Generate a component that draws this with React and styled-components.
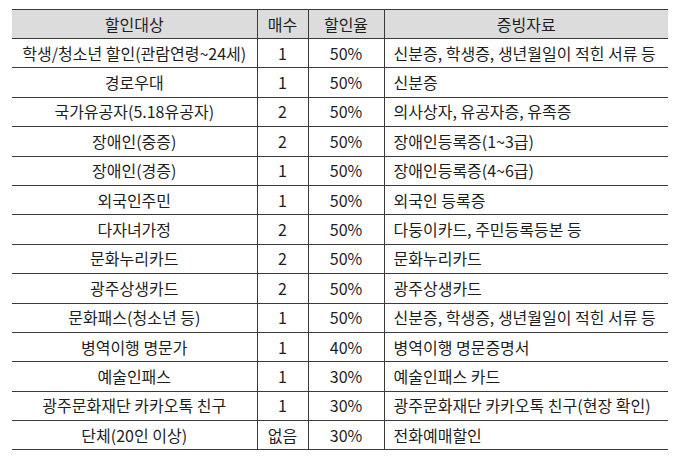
import React from "react";
import styled, { createGlobalStyle } from "styled-components";

const GlobalStyle = createGlobalStyle`
  body {
    margin: 0;
    background: #ffffff;
    font-family: "Noto Sans CJK KR", "Noto Sans", sans-serif;
  }
`;

const Page = styled.div`
  padding: 9px 22px 0 12px;
`;

const Table = styled.table`
  width: 656px;
  border-collapse: collapse;
  table-layout: fixed;
  border-top: 1.5px solid #3a3a3a;
  border-bottom: 1.5px solid #3a3a3a;
  color: #1e1e1e;
  font-size: 16px;
`;

const HeadCell = styled.th`
  height: 28px;
  padding: 0;
  background: #dcdcdc;
  font-weight: 400;
  text-align: center;
  border-bottom: 1px solid #3a3a3a;
  border-left: ${(p) => (p.$first ? "none" : "1px solid #3a3a3a")};
`;

const Cell = styled.td`
  height: 28.4px;
  padding: 0 ${(p) => (p.$left ? "9px" : "0")};
  text-align: ${(p) => (p.$left ? "left" : "center")};
  white-space: nowrap;
  line-height: 1.2;
  border-bottom: 1px solid #3a3a3a;
  border-left: ${(p) => (p.$first ? "none" : "1px solid #3a3a3a")};
`;

const rows = [
  ["학생/청소년 할인(관람연령~24세)", "1", "50%", "신분증, 학생증, 생년월일이 적힌 서류 등"],
  ["경로우대", "1", "50%", "신분증"],
  ["국가유공자(5.18유공자)", "2", "50%", "의사상자, 유공자증, 유족증"],
  ["장애인(중증)", "2", "50%", "장애인등록증(1~3급)"],
  ["장애인(경증)", "1", "50%", "장애인등록증(4~6급)"],
  ["외국인주민", "1", "50%", "외국인 등록증"],
  ["다자녀가정", "2", "50%", "다둥이카드, 주민등록등본 등"],
  ["문화누리카드", "2", "50%", "문화누리카드"],
  ["광주상생카드", "2", "50%", "광주상생카드"],
  ["문화패스(청소년 등)", "1", "50%", "신분증, 학생증, 생년월일이 적힌 서류 등"],
  ["병역이행 명문가", "1", "40%", "병역이행 명문증명서"],
  ["예술인패스", "1", "30%", "예술인패스 카드"],
  ["광주문화재단 카카오톡 친구", "1", "30%", "광주문화재단 카카오톡 친구(현장 확인)"],
  ["단체(20인 이상)", "없음", "30%", "전화예매할인"],
];

export default function App() {
  return (
    <Page>
      <GlobalStyle />
      <Table>
        <colgroup>
          <col style={{ width: 245 }} />
          <col style={{ width: 51 }} />
          <col style={{ width: 76 }} />
          <col style={{ width: 284 }} />
        </colgroup>
        <thead>
          <tr>
            <HeadCell $first>할인대상</HeadCell>
            <HeadCell>매수</HeadCell>
            <HeadCell>할인율</HeadCell>
            <HeadCell>증빙자료</HeadCell>
          </tr>
        </thead>
        <tbody>
          {rows.map((r, i) => (
            <tr key={i}>
              <Cell $first>{r[0]}</Cell>
              <Cell>{r[1]}</Cell>
              <Cell>{r[2]}</Cell>
              <Cell $left>{r[3]}</Cell>
            </tr>
          ))}
        </tbody>
      </Table>
    </Page>
  );
}
